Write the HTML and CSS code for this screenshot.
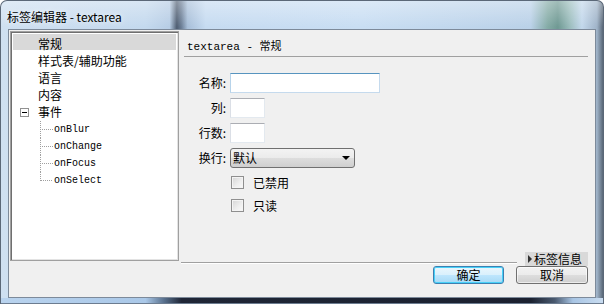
FILE: index.html
```html
<!DOCTYPE html>
<html lang="zh-CN">
<head>
    <meta charset="UTF-8">
    <title>标签编辑器 - textarea</title>
    <link rel="stylesheet" href="styles.css">
</head>
<body>
<div class="window">
    <div class="titlebar">标签编辑器 - textarea</div>
    <div class="client">
        <div class="main">
            <div class="tree">
                <div class="node selected">常规</div>
                <div class="node">样式表/辅助功能</div>
                <div class="node">语言</div>
                <div class="node">内容</div>
                <div class="node"><span class="toggle"></span>事件</div>
                <div class="children">
                    <div class="leaf">onBlur</div>
                    <div class="leaf">onChange</div>
                    <div class="leaf">onFocus</div>
                    <div class="leaf last">onSelect</div>
                </div>
            </div>

            <div class="panel">
                <div class="panel-head">textarea - 常规</div>
                <div class="form">
                    <div class="row"><label>名称:</label><input class="text wide hot" type="text"></div>
                    <div class="row"><label>列:</label><input class="text short" type="text"></div>
                    <div class="row"><label>行数:</label><input class="text short" type="text"></div>
                    <div class="row"><label>换行:</label>
                        <div class="combo"><span>默认</span><span class="arrow"></span></div>
                    </div>
                    <div class="check first"><span class="box"></span>已禁用</div>
                    <div class="check"><span class="box"></span>只读</div>
                </div>
                <div class="info-row">
                    <div class="sep"></div>
                    <div class="info"><span class="tri"></span>标签信息</div>
                </div>
            </div>
        </div>
        <div class="buttons">
            <button class="btn default">确定</button>
            <button class="btn">取消</button>
        </div>
    </div>
    <div class="frame-bottom"></div>
</div>
</body>
</html>
```

FILE: styles.css
```css
html, body {
    margin: 0;
    padding: 0;
    background: #fff;
}
body {
    width: 606px;
    height: 307px;
    overflow: hidden;
    font-family: "Noto Sans CJK SC", "Liberation Sans", sans-serif;
    font-size: 12px;
    color: #000;
}
.window {
    width: 604px;
    height: 304px;
    box-sizing: border-box;
    border: 1px solid #5b6878;
    border-bottom: none;
    border-radius: 7px 7px 0 0;
    background:
        linear-gradient(180deg, rgba(255,255,255,.35) 0, rgba(255,255,255,0) 26px),
        linear-gradient(90deg, #cfe0f1 0, #c4d9ee 24%, #b7cde5 28%, #4e5d71 29.2%, #6e8199 30%, #a8bfd9 31%, #c6dbf1 34%, #c9def3 60%, #bad1e8 88%, #84aba6 90.8%, #6f9993 92.5%, #9bbdbd 94.5%, #c3d8ec 96.5%, #9fb3c8 99%, #596777 100%);
    display: flex;
    flex-direction: column;
    overflow: hidden;
}
.titlebar {
    height: 28px;
    padding-left: 6px;
    line-height: 31px;
    font-size: 12px;
    text-shadow: 0 0 6px rgba(255,255,255,.9);
}
.client {
    margin-left: 7px;
    width: 588px;
    height: 269px;
    box-sizing: border-box;
    border: 1px solid #7d8a9a;
    background: #f0f0f0;
}
.main {
    display: flex;
    padding: 1px 0 0 1px;
    height: 236px;
    box-sizing: border-box;
}

/* tree */
.tree {
    width: 169px;
    height: 230px;
    box-sizing: border-box;
    border: 1px solid #a0a0a0;
    box-shadow: inset 1px 1px 0 #6f6f6f, inset -1px -1px 0 #e3e3e3;
    background: #fff;
    padding: 2px 2px 0 2px;
    align-self: flex-start;
}
.node {
    position: relative;
    height: 17px;
    line-height: 19px;
    padding-left: 25px;
}
.node.selected {
    background: #d9d9d9;
    height: 16px;
    margin-bottom: 1px;
}
.toggle {
    position: absolute;
    left: 7px;
    top: 6px;
    width: 9px;
    height: 9px;
    box-sizing: border-box;
    border: 1px solid #919191;
    background: #fff;
}
.toggle::after {
    content: "";
    position: absolute;
    left: 1px;
    top: 3px;
    width: 5px;
    height: 1px;
    background: #000;
}
.children {
    margin-left: 27px;
    padding-top: 2px;
}
.leaf {
    position: relative;
    height: 17px;
    line-height: 17px;
    padding-left: 13px;
    font-family: "Liberation Mono", monospace;
    font-size: 10px;
    border-left: 1px dotted #a0a0a0;
}
.leaf.last {
    border-left: none;
    padding-left: 14px;
}
.leaf.last::before {
    content: "";
    position: absolute;
    left: 0;
    top: 0;
    height: 9px;
    border-left: 1px dotted #a0a0a0;
}
.leaf::after {
    content: "";
    position: absolute;
    left: 1px;
    top: 8px;
    width: 11px;
    border-top: 1px dotted #a0a0a0;
}

/* right panel */
.panel {
    width: 404px;
    margin-left: 5px;
    display: flex;
    flex-direction: column;
    height: 235px;
}
.panel-head {
    height: 26px;
    box-sizing: border-box;
    padding: 9px 0 0 3px;
    line-height: 14px;
    font-family: "Liberation Mono", "Noto Sans CJK SC", monospace;
    font-size: 11px;
    border-bottom: 1px solid #a0a0a0;
}
.form {
    margin-top: 16px;
    display: flex;
    flex-direction: column;
    gap: 5px;
}
.row {
    display: flex;
    align-items: center;
    height: 20px;
    gap: 4px;
}
.row label {
    width: 42px;
    text-align: right;
    line-height: 20px;
}
.text {
    height: 20px;
    box-sizing: border-box;
    margin: 0;
    border: 1px solid #e3e9ef;
    border-top-color: #abadb3;
    border-left-color: #dbdfe6;
    background: #fff;
}
.text.hot {
    border-color: #c5daed;
    border-top-color: #5794bf;
    border-left-color: #b7d3ea;
}
.wide { width: 150px; }
.short { width: 35px; }
.combo {
    width: 125px;
    height: 20px;
    box-sizing: border-box;
    border: 1px solid #707070;
    border-radius: 3px;
    background: linear-gradient(180deg, #f3f3f3 0, #ebebeb 50%, #dddddd 51%, #cfcfcf 100%);
    display: flex;
    align-items: center;
    justify-content: space-between;
    padding: 0 4px 0 2px;
    line-height: 18px;
}
.arrow {
    width: 0;
    height: 0;
    border-left: 4px solid transparent;
    border-right: 4px solid transparent;
    border-top: 4px solid #000;
}
.check {
    display: flex;
    align-items: center;
    gap: 9px;
    margin-left: 47px;
    height: 13px;
    line-height: 13px;
}
.check.first { margin-top: 3px; }
.check + .check { margin-top: 5px; }
.box {
    width: 13px;
    height: 13px;
    box-sizing: border-box;
    border: 1px solid #8f8f8f;
    background: linear-gradient(135deg, #d5d5d5 0, #efefef 60%, #fafafa 100%);
    box-shadow: inset 0 0 0 1px #f4f4f4;
}
.info-row {
    margin-top: auto;
    margin-left: -3px;
    width: 407px;
    height: 14px;
    display: flex;
    align-items: flex-start;
}
.sep {
    width: 336px;
    height: 1px;
    margin-top: 10px;
    background: #a0a0a0;
    box-shadow: 0 1px 0 #fff;
}
.info {
    margin-left: 8px;
    width: 63px;
    height: 14px;
    background: #d9d9d9;
    display: flex;
    align-items: center;
    line-height: 14px;
}
.tri {
    width: 0;
    height: 0;
    margin: 0 2px 0 3px;
    border-top: 4px solid transparent;
    border-bottom: 4px solid transparent;
    border-left: 4px solid #333;
}

/* buttons */
.buttons {
    display: flex;
    justify-content: flex-end;
    gap: 12px;
    padding-right: 7px;
}
.btn {
    width: 72px;
    height: 18px;
    padding: 0;
    margin: 0;
    box-sizing: border-box;
    font-family: "Noto Sans CJK SC", sans-serif;
    font-size: 12px;
    line-height: 14px;
    color: #000;
    border: 1px solid #707070;
    border-radius: 3px;
    background: linear-gradient(180deg, #f2f2f2 0, #ebebeb 50%, #dddddd 51%, #cfcfcf 100%);
    box-shadow: inset 0 0 0 1px rgba(255,255,255,.6);
}
.btn.default {
    width: 71px;
    border-color: #3c7fb1;
    box-shadow: inset 0 0 0 1px #48d1f8;
    background: linear-gradient(180deg, #eaf6fd 0, #d9f0fc 50%, #bee6fd 51%, #a7d9f5 100%);
}
.frame-bottom {
    margin-top: auto;
    height: 5px;
    background: linear-gradient(90deg, #b9d3ee 0, #aac8e8 24%, #5b7390 27%, #1f2636 30%, #1b2130 88%, #4a5a70 92%, #a8c5e4 95%, #c9dcf0 100%);
    border-bottom: 1px solid #6c7c90;
}
```
